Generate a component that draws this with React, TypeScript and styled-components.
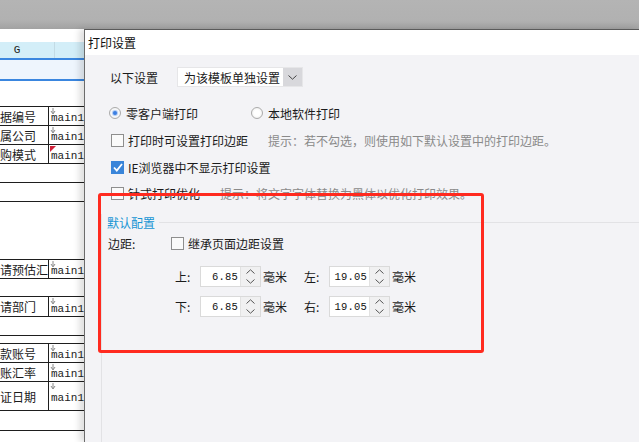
import React from "react";
import styled, { createGlobalStyle } from "styled-components";

const GlobalStyle = createGlobalStyle`
  html, body { margin: 0; padding: 0; }
  body {
    font-family: "Noto Sans CJK SC", "Noto Sans", sans-serif;
    font-size: 12px;
    color: #1b1b1b;
  }
  * { box-sizing: border-box; }
`;

const Page = styled.div`
  position: relative;
  width: 639px;
  height: 442px;
  overflow: hidden;
  display: flex;
  flex-direction: column;
  background: #fff;
`;

const TopBar = styled.div`
  flex: none;
  height: 29px;
  background: linear-gradient(#b4b4b4 0%, #b1b1b1 70%, #a2a2a2 100%);
`;

const Main = styled.div`
  flex: 1;
  display: flex;
  min-height: 0;
`;

/* spreadsheet behind the dialog */
const Sheet = styled.div`
  flex: none;
  width: 84px;
  overflow: hidden;
  display: flex;
  flex-direction: column;
  padding-top: 13px;
`;

const ColHeader = styled.div`
  height: 19px;
  display: grid;
  grid-template-columns: 55px 1fr;
  background: #d3eef8;
  font-family: "Liberation Mono", monospace;
  font-size: 11px;
`;

const ColCell = styled.div<{ $divider?: boolean }>`
  display: flex;
  align-items: center;
  justify-content: center;
  padding-right: ${(p) => (p.$divider ? "20px" : "0")};
  border-right: ${(p) => (p.$divider ? "1px solid #c3dbe5" : "none")};
`;

const BlueLine = styled.div`
  height: 2px;
  background: #3a86df;
`;

const FrozenRow = styled.div`
  height: 23px;
  background: #eef5fd;
`;

const SheetRow = styled.div<{ $h: number; $line: boolean }>`
  flex: none;
  height: ${(p) => p.$h}px;
  display: flex;
  border-top: ${(p) => (p.$line ? "1px solid #1e1e1e" : "none")};
`;

const LabelCell = styled.div<{ $filled: boolean }>`
  width: 55px;
  display: flex;
  align-items: center;
  white-space: nowrap;
  overflow: hidden;
  border-right: ${(p) => (p.$filled ? "1px solid #1e1e1e" : "none")};
`;

const ValueCell = styled.div`
  position: relative;
  flex: 1;
  display: flex;
  align-items: center;
  padding: 4px 0 0 2px;
  font-family: "Liberation Mono", monospace;
  font-size: 11px;
  color: #222;
  white-space: nowrap;
`;

const Mark = styled.svg`
  position: absolute;
  left: 1px;
  top: 1px;
`;

/* dialog */
const Dialog = styled.div`
  flex: 1;
  display: flex;
  flex-direction: column;
  border-top: 1px solid #5a5a5a;
  border-left: 1px solid #6b6b6b;
  box-shadow: -5px 0 6px rgba(0, 0, 0, 0.12);
  z-index: 1;
`;

const TitleBar = styled.div`
  height: 25px;
  flex: none;
  display: flex;
  align-items: center;
  padding: 0 0 1px 3px;
  background: #fff;
  color: #111;
`;

const Body = styled.div`
  flex: 1;
  background: #f3f3f6;
  padding: 12px 0 0 16px;
  display: flex;
  flex-direction: column;
`;

const Section = styled.div`
  padding-left: 9px;
  display: flex;
  flex-direction: column;
`;

const Row = styled.div<{ $top: number }>`
  height: 16px;
  margin-top: ${(p) => p.$top}px;
  display: flex;
  align-items: center;
  white-space: nowrap;
`;

const SelectRow = styled.div`
  height: 20px;
  display: flex;
  align-items: center;
`;

const FieldLabel = styled.span<{ $w: number }>`
  width: ${(p) => p.$w}px;
  flex: none;
`;

const Select = styled.div`
  width: 126px;
  height: 20px;
  display: flex;
  background: #fff;
  border: 1px solid #e6e6e8;
`;

const SelectText = styled.div`
  flex: 1;
  display: flex;
  align-items: center;
  padding-left: 6px;
`;

const SelectButton = styled.div`
  width: 19px;
  display: flex;
  align-items: center;
  justify-content: center;
  background: #d8d8dc;
`;

const RadioGroup = styled.label<{ $w?: number }>`
  display: flex;
  align-items: center;
  gap: 5px;
  width: ${(p) => (p.$w ? `${p.$w}px` : "auto")};
  margin-left: -1px;
`;

const Radio = styled.span<{ $on?: boolean }>`
  width: 12px;
  height: 12px;
  border-radius: 50%;
  border: 1px solid #ababab;
  background: radial-gradient(circle, #ffffff 40%, #e6e6e6 100%);
  display: flex;
  align-items: center;
  justify-content: center;
  &::after {
    content: "";
    width: 4px;
    height: 4px;
    border-radius: 50%;
    background: ${(p) => (p.$on ? "#3b7fe2" : "transparent")};
    box-shadow: ${(p) => (p.$on ? "0 0 1px 1px #a9c6f2" : "none")};
  }
`;

const Check = styled.span<{ $on?: boolean }>`
  flex: none;
  width: 13px;
  height: 13px;
  margin-left: 1px;
  border: 1px solid ${(p) => (p.$on ? "#3a85d9" : "#8e8e8e")};
  background: ${(p) => (p.$on ? "#3a85d9" : "#fafafa")};
  display: flex;
  align-items: center;
  justify-content: center;
`;

const CheckText = styled.span`
  margin-left: 4px;
`;

const Hint = styled.span`
  margin-left: 20px;
  color: #8a8a8a;
`;

const FieldsetHead = styled.div`
  margin-top: 13px;
  height: 17px;
  display: flex;
  align-items: center;
  border-left: 1px solid #e2e2e5;
`;

const Legend = styled.span`
  margin-left: 5px;
  padding-right: 4px;
  color: #1795d4;
`;

const HeadLine = styled.div`
  flex: 1;
  height: 1px;
  background: #e2e2e5;
`;

const FieldsetBody = styled.div`
  flex: 1;
  border-left: 1px solid #e2e2e5;
  padding: 4px 0 0 6px;
  display: flex;
  flex-direction: column;
`;

const MarginRow = styled.div<{ $top: number }>`
  margin-top: ${(p) => p.$top}px;
  padding-left: 67px;
  height: 21px;
  display: flex;
  align-items: center;
`;

const SideLabel = styled.span<{ $gap?: number }>`
  width: 25px;
  margin-left: ${(p) => p.$gap || 0}px;
`;

const SpinBox = styled.div`
  width: 61px;
  height: 21px;
  display: flex;
  border: 1px solid #dadada;
  background: #fff;
`;

const SpinValue = styled.div`
  flex: 1;
  display: flex;
  align-items: center;
  justify-content: flex-end;
  padding-right: 2px;
  font-family: "Liberation Mono", monospace;
  font-size: 10.5px;
  letter-spacing: 0.2px;
  color: #111;
`;

const SpinButtons = styled.div`
  width: 20px;
  display: flex;
  flex-direction: column;
  background: #f0f0f1;
  border-left: 1px solid #e2e2e2;
`;

const SpinHalf = styled.div`
  flex: 1;
  display: flex;
  align-items: center;
  justify-content: center;
`;

const Unit = styled.span`
  margin-left: 2px;
`;

const Annotation = styled.div`
  position: absolute;
  left: 98px;
  top: 193px;
  width: 386px;
  height: 160px;
  border: 3px solid #ff2a1f;
  border-radius: 3px;
  pointer-events: none;
  z-index: 2;
`;

const sheetRows = [
  { h: 25 },
  { h: 19, label: "据编号" },
  { h: 19, label: "属公司" },
  { h: 19, label: "购模式", red: true },
  { h: 19 },
  { h: 19 },
  { h: 58 },
  { h: 19, label: "请预估汇" },
  { h: 18 },
  { h: 20, label: "请部门" },
  { h: 19 },
  { h: 8 },
  { h: 19, label: "款账号" },
  { h: 19, label: "账汇率" },
  { h: 29, label: "证日期" },
  { h: 20 },
  { h: 12 },
];

const Chevron = ({ up, color = "#555" }: { up?: boolean; color?: string }) => (
  <svg width="9" height="5" viewBox="0 0 9 5">
    <path
      d={up ? "M0.5 4.5 L4.5 0.8 L8.5 4.5" : "M0.5 0.5 L4.5 4.2 L8.5 0.5"}
      fill="none"
      stroke={color}
      strokeWidth="1"
    />
  </svg>
);

const Spin = ({ value }: { value: string }) => (
  <SpinBox>
    <SpinValue>{value}</SpinValue>
    <SpinButtons>
      <SpinHalf>
        <Chevron up />
      </SpinHalf>
      <SpinHalf>
        <Chevron />
      </SpinHalf>
    </SpinButtons>
  </SpinBox>
);

const App = () => {
  return (
    <>
      <GlobalStyle />
      <Page>
        <TopBar />
        <Main>
          <Sheet>
            <ColHeader>
              <ColCell $divider>G</ColCell>
              <ColCell />
            </ColHeader>
            <BlueLine />
            <FrozenRow />
            <BlueLine />
            {sheetRows.map((row, index) => (
              <SheetRow key={index} $h={row.h} $line={index > 0}>
                <LabelCell $filled={!!row.label}>{row.label}</LabelCell>
                {row.label && (
                  <ValueCell>
                    <Mark width="6" height="7" viewBox="0 0 6 7">
                      {row.red ? (
                        <path d="M0 0 H6 L0 6 Z" fill="#d0213a" />
                      ) : (
                        <path d="M3 0 V5 M1 3 L3 6 L5 3" stroke="#8a8a8a" fill="none" />
                      )}
                    </Mark>
                    main1
                  </ValueCell>
                )}
              </SheetRow>
            ))}
          </Sheet>

          <Dialog>
            <TitleBar>打印设置</TitleBar>
            <Body>
              <Section>
                <SelectRow>
                  <FieldLabel $w={67}>以下设置</FieldLabel>
                  <Select>
                    <SelectText>为该模板单独设置</SelectText>
                    <SelectButton>
                      <Chevron color="#444" />
                    </SelectButton>
                  </Select>
                </SelectRow>

                <Row $top={18}>
                  <RadioGroup $w={143}>
                    <Radio $on />
                    零客户端打印
                  </RadioGroup>
                  <RadioGroup>
                    <Radio />
                    本地软件打印
                  </RadioGroup>
                </Row>

                <Row $top={11}>
                  <Check />
                  <CheckText>打印时可设置打印边距</CheckText>
                  <Hint>提示：若不勾选，则使用如下默认设置中的打印边距。</Hint>
                </Row>

                <Row $top={11}>
                  <Check $on>
                    <svg width="10" height="9" viewBox="0 0 10 9">
                      <path d="M1 4.5 L3.8 7.5 L9 1" fill="none" stroke="#fff" strokeWidth="1.8" />
                    </svg>
                  </Check>
                  <CheckText>IE浏览器中不显示打印设置</CheckText>
                </Row>

                <Row $top={10}>
                  <Check />
                  <CheckText>针式打印优化</CheckText>
                  <Hint>提示：将文字字体替换为黑体以优化打印效果。</Hint>
                </Row>
              </Section>

              <FieldsetHead>
                <Legend>默认配置</Legend>
                <HeadLine />
              </FieldsetHead>
              <FieldsetBody>
                <Row $top={0}>
                  <FieldLabel $w={62}>边距:</FieldLabel>
                  <Check />
                  <CheckText>继承页面边距设置</CheckText>
                </Row>
                <MarginRow $top={15}>
                  <SideLabel>上:</SideLabel>
                  <Spin value="6.85" />
                  <Unit>毫米</Unit>
                  <SideLabel $gap={17}>左:</SideLabel>
                  <Spin value="19.05" />
                  <Unit>毫米</Unit>
                </MarginRow>
                <MarginRow $top={9}>
                  <SideLabel>下:</SideLabel>
                  <Spin value="6.85" />
                  <Unit>毫米</Unit>
                  <SideLabel $gap={17}>右:</SideLabel>
                  <Spin value="19.05" />
                  <Unit>毫米</Unit>
                </MarginRow>
              </FieldsetBody>
            </Body>
          </Dialog>
        </Main>
        <Annotation />
      </Page>
    </>
  );
};

export default App;
